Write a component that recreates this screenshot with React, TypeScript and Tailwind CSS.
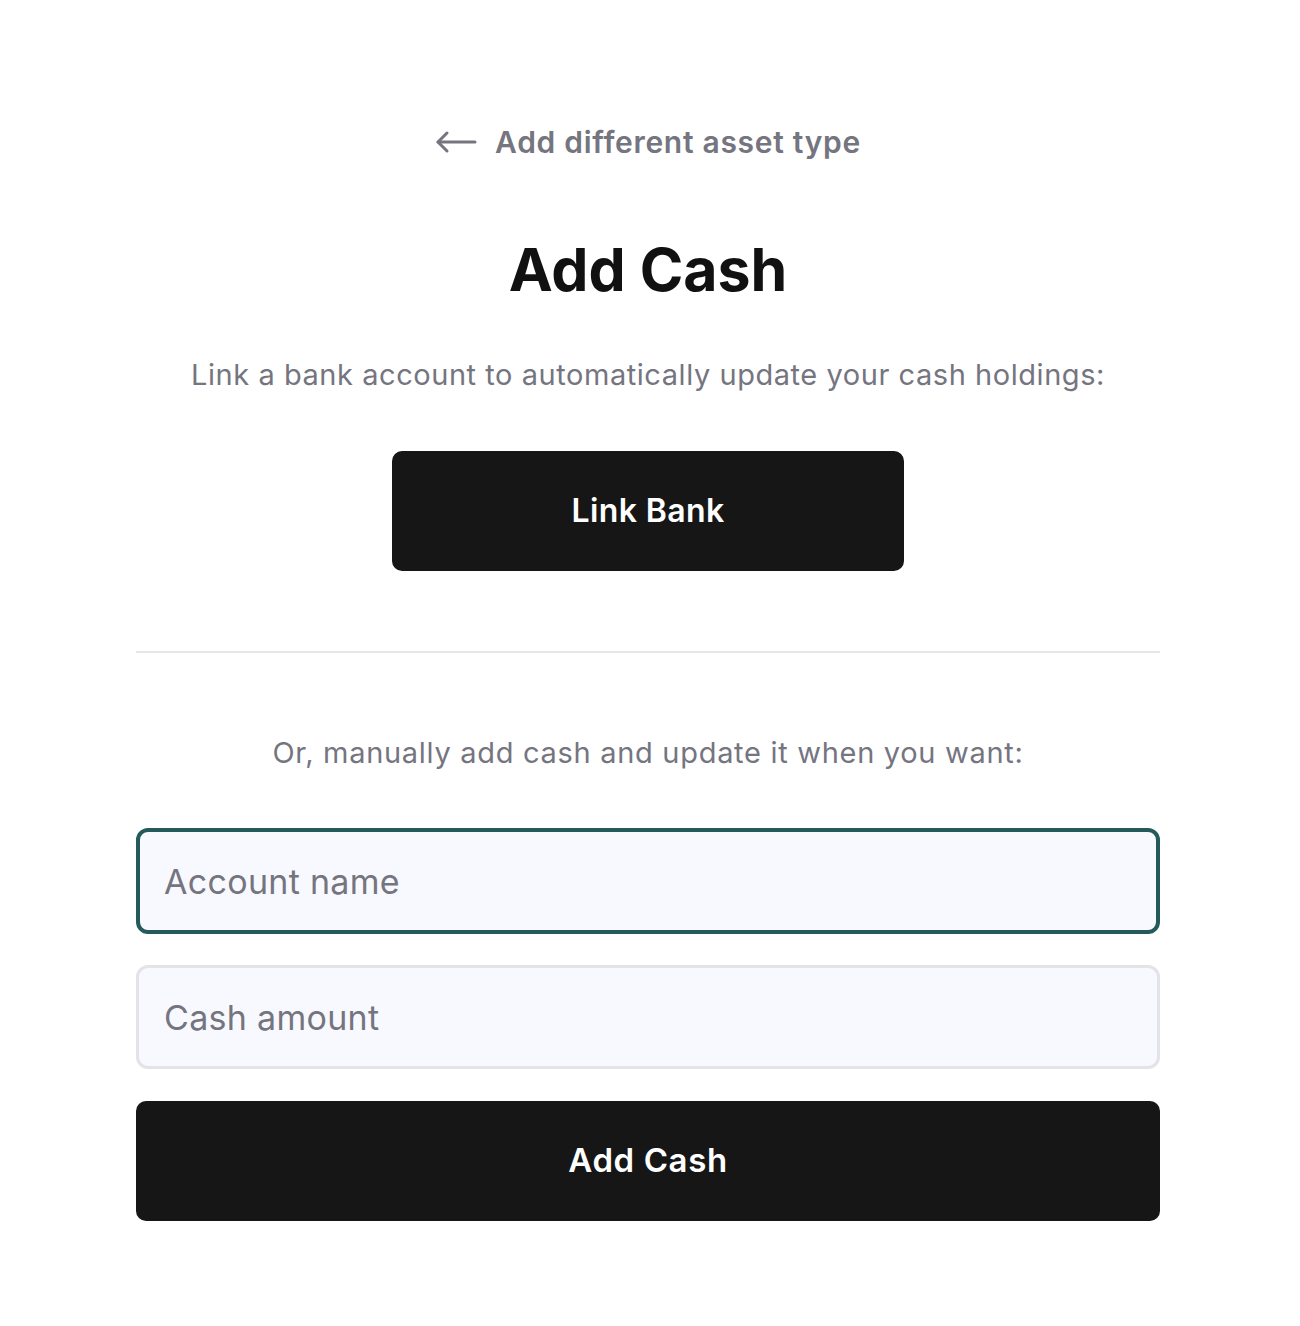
import { useState } from 'react';

const font = { fontFamily: '"Inter", "Open Sans", sans-serif' };

export default function App() {
  const [accountName, setAccountName] = useState('');
  const [amount, setAmount] = useState('');

  return (
    <div className="min-h-[1326px] bg-white" style={font}>
      <div className="ml-[136px] w-[1024px] pt-[120px] flex flex-col items-center">
        <button type="button" className="flex items-center gap-[18px] text-[#75757f] h-[44px]">
          <svg width="42" height="24" viewBox="0 0 42 24" fill="none" stroke="currentColor" strokeWidth="3" strokeLinecap="round" strokeLinejoin="round">
            <path d="M40 12H3" />
            <path d="M12 3L3 12l9 9" />
          </svg>
          <span className="text-[30px] font-semibold tracking-[0.7px]">Add different asset type</span>
        </button>

        <h1 className="mt-[71px] text-[59px] leading-[70px] font-bold text-[#111111]">Add Cash</h1>

        <p className="mt-[52px] text-[29px] leading-[36px] tracking-[0.55px] text-[#75757f]">
          Link a bank account to automatically update your cash holdings:
        </p>

        <button
          type="button"
          className="mt-[58px] w-[512px] h-[120px] rounded-[10px] bg-[#161616] text-white text-[32px] font-semibold tracking-[0.4px]"
        >
          Link Bank
        </button>

        <div className="mt-[80px] w-full h-[2px] bg-[#e6e6eb]" />

        <p className="mt-[82px] text-[29px] leading-[36px] tracking-[0.7px] text-[#75757f]">
          Or, manually add cash and update it when you want:
        </p>

        <input
          value={accountName}
          onChange={(e) => setAccountName(e.target.value)}
          placeholder="Account name"
          className="mt-[57px] w-full h-[106px] rounded-[12px] border-[4px] border-[#245a5b] bg-[#f8f9fe] px-[24px] text-[34px] tracking-[0.3px] text-[#222] placeholder:text-[#75757f] outline-none"
        />

        <input
          value={amount}
          onChange={(e) => setAmount(e.target.value)}
          placeholder="Cash amount"
          className="mt-[31px] w-full h-[104px] rounded-[12px] border-[3px] border-[#e4e4e8] bg-[#f8f9fe] px-[25px] text-[34px] tracking-[0.3px] text-[#222] placeholder:text-[#75757f] outline-none"
        />

        <button
          type="button"
          className="mt-[32px] w-full h-[120px] rounded-[10px] bg-[#161616] text-white text-[33px] font-semibold tracking-[0.6px]"
        >
          Add Cash
        </button>
      </div>
    </div>
  );
}
